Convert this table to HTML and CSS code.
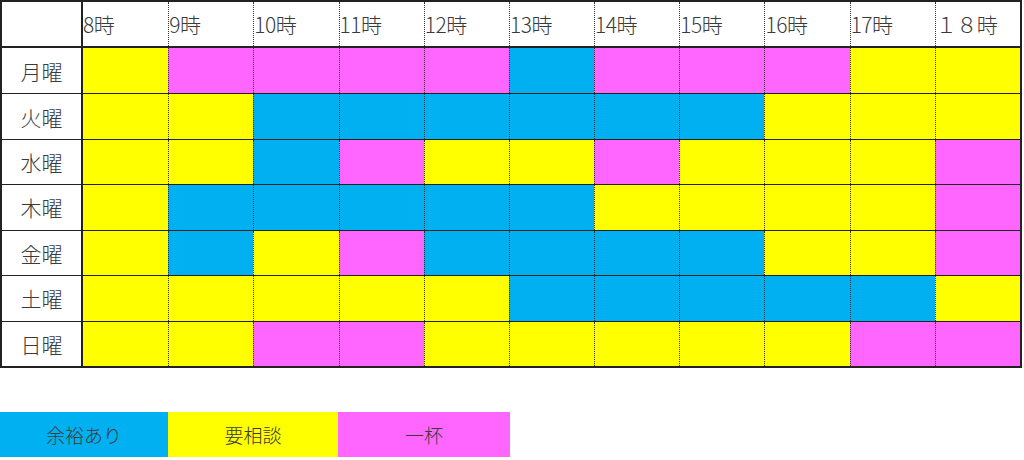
FILE: index.html
```html
<!DOCTYPE html>
<html lang="ja">
<head>
    <meta charset="UTF-8">
    <meta name="viewport" content="width=device-width, initial-scale=1.0">
    <title>混雑状況</title>
    <link rel="stylesheet" href="styles.css">
</head>
<body>
    <div class="schedule">
        <div class="row head">
            <div class="cell day"></div>
            <div class="cell hour">8時</div>
            <div class="cell hour">9時</div>
            <div class="cell hour">10時</div>
            <div class="cell hour">11時</div>
            <div class="cell hour">12時</div>
            <div class="cell hour">13時</div>
            <div class="cell hour">14時</div>
            <div class="cell hour">15時</div>
            <div class="cell hour">16時</div>
            <div class="cell hour">17時</div>
            <div class="cell hour">１８時</div>
        </div>
        <div class="body">
            <div class="row">
                <div class="cell day">月曜</div>
                <div class="cell y"></div><div class="cell p"></div><div class="cell p"></div><div class="cell p"></div><div class="cell p"></div><div class="cell b"></div><div class="cell p"></div><div class="cell p"></div><div class="cell p"></div><div class="cell y"></div><div class="cell y"></div>
            </div>
            <div class="row">
                <div class="cell day">火曜</div>
                <div class="cell y"></div><div class="cell y"></div><div class="cell b"></div><div class="cell b"></div><div class="cell b"></div><div class="cell b"></div><div class="cell b"></div><div class="cell b"></div><div class="cell y"></div><div class="cell y"></div><div class="cell y"></div>
            </div>
            <div class="row">
                <div class="cell day">水曜</div>
                <div class="cell y"></div><div class="cell y"></div><div class="cell b"></div><div class="cell p"></div><div class="cell y"></div><div class="cell y"></div><div class="cell p"></div><div class="cell y"></div><div class="cell y"></div><div class="cell y"></div><div class="cell p"></div>
            </div>
            <div class="row">
                <div class="cell day">木曜</div>
                <div class="cell y"></div><div class="cell b"></div><div class="cell b"></div><div class="cell b"></div><div class="cell b"></div><div class="cell b"></div><div class="cell y"></div><div class="cell y"></div><div class="cell y"></div><div class="cell y"></div><div class="cell p"></div>
            </div>
            <div class="row">
                <div class="cell day">金曜</div>
                <div class="cell y"></div><div class="cell b"></div><div class="cell y"></div><div class="cell p"></div><div class="cell b"></div><div class="cell b"></div><div class="cell b"></div><div class="cell b"></div><div class="cell y"></div><div class="cell y"></div><div class="cell p"></div>
            </div>
            <div class="row">
                <div class="cell day">土曜</div>
                <div class="cell y"></div><div class="cell y"></div><div class="cell y"></div><div class="cell y"></div><div class="cell y"></div><div class="cell b"></div><div class="cell b"></div><div class="cell b"></div><div class="cell b"></div><div class="cell b"></div><div class="cell y"></div>
            </div>
            <div class="row">
                <div class="cell day">日曜</div>
                <div class="cell y"></div><div class="cell y"></div><div class="cell p"></div><div class="cell p"></div><div class="cell y"></div><div class="cell y"></div><div class="cell y"></div><div class="cell y"></div><div class="cell y"></div><div class="cell p"></div><div class="cell p"></div>
            </div>
        </div>
    </div>

    <div class="legend">
        <div class="key b">余裕あり</div>
        <div class="key y">要相談</div>
        <div class="key p">一杯</div>
    </div>
</body>
</html>
```
FILE: styles.css
```css
* {
    box-sizing: border-box;
}
body {
    margin: 0;
    background: #fff;
    font-family: "Noto Sans CJK JP", "Noto Sans", sans-serif;
    font-weight: 300;
    color: #3a3a3a;
}
.schedule {
    width: 1022px;
    border: 2px solid #222;
}
.row {
    display: grid;
    grid-template-columns: 81px repeat(11, 1fr);
}
.row.head {
    height: 46px;
    border-bottom: 2px solid #222;
}
.body {
    display: grid;
    grid-template-rows: repeat(7, 1fr);
    height: 318px;
}
.body .row {
    border-top: 1px solid #222;
}
.body .row:first-child {
    border-top: none;
}
.cell {
    border-left: 1px dotted #333;
    display: flex;
    align-items: center;
}
.cell.day {
    border-left: none;
    border-right: 2px solid #222;
    justify-content: center;
    font-size: 21px;
}
.cell.day + .cell {
    border-left: none;
}
.cell.hour {
    font-size: 21px;
    letter-spacing: -0.5px;
}
.y {
    background: #ffff00;
}
.p {
    background: #ff66ff;
}
.b {
    background: #00b0f0;
}
.legend {
    display: flex;
    margin-top: 44px;
}
.key {
    height: 45px;
    display: flex;
    align-items: center;
    justify-content: center;
    font-size: 19px;
}
.key.b {
    width: 168px;
}
.key.y {
    width: 170px;
}
.key.p {
    width: 172px;
}
```
